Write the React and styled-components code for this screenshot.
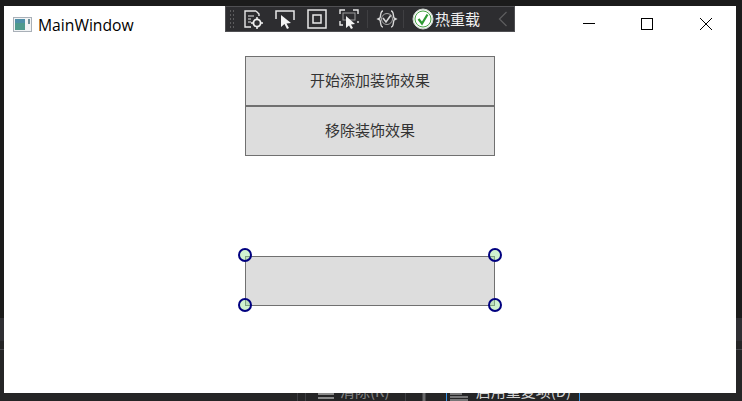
import React from 'react';
import styled, { createGlobalStyle } from 'styled-components';

const GlobalStyle = createGlobalStyle`
  html, body {
    margin: 0;
    padding: 0;
  }
  body {
    width: 742px;
    height: 401px;
    overflow: hidden;
  }
`;

const Desktop = styled.div`
  position: relative;
  width: 742px;
  height: 401px;
  padding: 6px 6px 0 4px;
  box-sizing: border-box;
  display: flex;
  flex-direction: column;
  background: linear-gradient(
    to bottom,
    #1b1b1b 0,
    #1b1b1b 318px,
    #2f2f33 318px,
    #2f2f33 341px,
    #252526 341px,
    #252526 349px,
    #46464a 349px,
    #46464a 350px,
    #252526 350px
  );
`;

const Window = styled.div`
  width: 732px;
  height: 387px;
  flex: none;
  background: #ffffff;
  display: flex;
  flex-direction: column;
`;

const TitleBar = styled.div`
  height: 36px;
  flex: none;
  display: flex;
  align-items: center;
  padding-left: 9px;
  font-family: "Open Sans", "Liberation Sans", sans-serif;
  font-size: 15.7px;
  color: #000000;
`;

const AppIcon = styled.svg`
  width: 20px;
  height: 15px;
  margin-right: 5px;
`;

const Title = styled.span`
  flex: 1;
  padding-top: 2px;
`;

const WindowButton = styled.button`
  width: ${props => (props.$wide ? 60 : 58)}px;
  height: 36px;
  padding: 0;
  border: none;
  background: transparent;
  display: flex;
  align-items: center;
  justify-content: center;
`;

const Content = styled.div`
  flex: 1;
  display: flex;
  flex-direction: column;
  align-items: center;
  padding-top: 14px;
`;

const ActionButton = styled.button`
  width: 250px;
  height: 50px;
  box-sizing: border-box;
  flex: none;
  margin-bottom: ${props => props.$gap || 0}px;
  padding: 0 0 4px;
  border: 1px solid #707070;
  background: #dddddd;
  color: #333333;
  font-family: "Noto Sans CJK SC", "Liberation Sans", sans-serif;
  font-size: 15px;
`;

const AdornedBox = styled.div`
  position: relative;
  width: 250px;
  height: 50px;
  box-sizing: border-box;
  flex: none;
  border: 1px solid #707070;
  background: #dddddd;
`;

const Handle = styled.span`
  position: absolute;
  width: 14px;
  height: 14px;
  box-sizing: border-box;
  border: 2.4px solid #00007f;
  border-radius: 50%;
  background: rgba(150, 230, 150, 0.45);
  left: ${props => (props.$right ? '242px' : '-8px')};
  top: ${props => (props.$bottom ? '41px' : '-9px')};
`;

const Toolbar = styled.div`
  position: absolute;
  left: 225px;
  top: 6px;
  width: 290px;
  height: 26px;
  box-sizing: border-box;
  border: 1px solid #505053;
  background: #2d2d30;
  display: flex;
  align-items: center;
`;

const Grip = styled.div`
  width: 6px;
  height: 20px;
  flex: none;
  margin: 0 7px 0 3px;
  background-image: radial-gradient(circle, #5c5c5e 1px, transparent 1px);
  background-size: 3px 4px;
`;

const ToolIcon = styled.svg`
  width: 22px;
  height: 22px;
  flex: none;
  margin-right: ${props => props.$gap ?? 10}px;
`;

const Divider = styled.div`
  width: 1px;
  height: 18px;
  flex: none;
  background: #3f3f42;
  margin-right: ${props => props.$gap || 8}px;
`;

const HotReload = styled.span`
  color: #f1f1f1;
  font-family: "Noto Sans CJK SC", sans-serif;
  font-size: 15px;
  line-height: 24px;
  width: 47px;
  flex: none;
  margin: 0 15px 0 1px;
  white-space: nowrap;
`;

const BottomStrip = styled.div`
  height: 8px;
  flex: none;
  margin: 0 -6px 0 -4px;
  overflow: hidden;
  display: flex;
  align-items: flex-start;
  background: #252526;
  color: #d4d4d4;
  font-family: "Noto Sans CJK SC", sans-serif;
  font-size: 15px;
`;

const StripLabel = styled.span`
  flex: none;
  line-height: 20px;
  margin-top: -12px;
  margin-left: ${props => props.$left}px;
  white-space: nowrap;
  opacity: ${props => (props.$dim ? 0.55 : 1)};
`;

const StripRule = styled.i`
  flex: none;
  width: 1px;
  height: 8px;
  margin-left: ${props => props.$left}px;
  background: ${props => props.$color || '#3f3f42'};
`;

const StripIcon = styled.svg`
  flex: none;
  width: 18px;
  height: 8px;
  margin-left: ${props => props.$left}px;
`;

function App() {
  return (
    <Desktop>
      <GlobalStyle />
      <Window>
        <TitleBar>
          <AppIcon viewBox="0 0 20 15">
            <rect x="0.5" y="0.5" width="18" height="14" fill="#f2f4f5" stroke="#a9b0b8" />
            <rect x="2" y="2" width="10" height="11" fill="#4f9a8d" />
            <rect x="2" y="2" width="10" height="4" fill="#4e8fa8" />
            <rect x="15" y="2" width="2" height="5" fill="#6f8f98" />
          </AppIcon>
          <Title>MainWindow</Title>
          <WindowButton aria-label="minimize">
            <svg width="12" height="12" viewBox="0 0 12 12">
              <path d="M0 5.5H12" stroke="#000" />
            </svg>
          </WindowButton>
          <WindowButton aria-label="maximize">
            <svg width="12" height="12" viewBox="0 0 12 12">
              <rect x="0.5" y="0.5" width="11" height="11" fill="none" stroke="#000" />
            </svg>
          </WindowButton>
          <WindowButton $wide aria-label="close">
            <svg width="12" height="12" viewBox="0 0 12 12">
              <path d="M0 0L12 12M12 0L0 12" stroke="#000" />
            </svg>
          </WindowButton>
        </TitleBar>
        <Content>
          <ActionButton>开始添加装饰效果</ActionButton>
          <ActionButton $gap={100}>移除装饰效果</ActionButton>
          <AdornedBox>
            <Handle />
            <Handle $right />
            <Handle $bottom />
            <Handle $right $bottom />
          </AdornedBox>
        </Content>
      </Window>

      <BottomStrip>
        <StripRule $left={297} />
        <StripRule $left={7} />
        <StripIcon $left={11} viewBox="0 0 18 8">
          <path d="M1 1H17M1 5H17" stroke="#8a8a8a" strokeWidth="2" />
        </StripIcon>
        <StripLabel $left={5} $dim>清除(R)</StripLabel>
        <StripRule $left={15} />
        <StripIcon $left={9} viewBox="0 0 18 8">
          <path d="M9 0V8" stroke="#6a6a6a" strokeWidth="3" />
        </StripIcon>
        <StripRule $left={13} $color="#3794e8" />
        <StripIcon $left={3} viewBox="0 0 18 8">
          <path d="M0 1H12M0 4H18M0 7H18" stroke="#c8c8c8" />
        </StripIcon>
        <StripLabel $left={8}>启用重复项(D)</StripLabel>
        <StripRule $left={8} $color="#3794e8" />
      </BottomStrip>

      <Toolbar>
        <Grip />
        <ToolIcon viewBox="0 0 22 22" $gap={10}>
          <path d="M14 3H3V19H9M14 3L17 6V8" fill="none" stroke="#e8e8e8" strokeWidth="1.4" />
          <path d="M6 8H12M6 11H9M6 14H9" stroke="#e8e8e8" strokeWidth="1.2" />
          <circle cx="15" cy="15" r="3.6" fill="none" stroke="#f1f1f1" strokeWidth="1.8" />
          <path d="M15 9V11M15 19V21M9 15H11M19 15H21" stroke="#f1f1f1" strokeWidth="1.5" />
        </ToolIcon>
        <ToolIcon viewBox="0 0 22 22" $gap={10}>
          <path d="M2 11V3H20V12" fill="none" stroke="#e8e8e8" strokeWidth="1.5" />
          <path d="M7 7L7 19L10.5 16L13 21L15 20L12.5 15.5L17 15Z" fill="#f4f4f4" />
        </ToolIcon>
        <ToolIcon viewBox="0 0 22 22" $gap={10}>
          <rect x="2" y="2" width="18" height="18" fill="none" stroke="#e8e8e8" strokeWidth="1.5" />
          <rect x="7" y="7" width="8" height="8" fill="none" stroke="#e8e8e8" strokeWidth="1.5" />
        </ToolIcon>
        <ToolIcon viewBox="0 0 22 22" $gap={7}>
          <path d="M2 6V2H7M15 2H20V6M2 13V17H5M20 13V15" fill="none" stroke="#e8e8e8" strokeWidth="1.4" />
          <rect x="5" y="5" width="12" height="7" fill="none" stroke="#9a9a9a" />
          <path d="M8 8L8 20L11 17.5L13 21L15 20L13 16.5L17 16Z" fill="#f4f4f4" />
        </ToolIcon>
        <Divider $gap={8} />
        <ToolIcon viewBox="0 0 22 22" $gap={5}>
          <path d="M7 3C4 3 5 8 4 10L2 11L4 12C5 14 4 19 7 19M15 3C18 3 17 8 18 10L20 11L18 12C17 14 18 19 15 19" fill="none" stroke="#d8d8d8" strokeWidth="1.4" />
          <path d="M7 10L10 14L15 7" fill="none" stroke="#d8d8d8" strokeWidth="1.6" />
          <circle cx="11" cy="11" r="5.5" fill="none" stroke="#a8a8a8" />
        </ToolIcon>
        <Divider $gap={8} />
        <ToolIcon viewBox="0 0 22 22" $gap={0}>
          <circle cx="11" cy="11" r="10" fill="#f7f7f7" stroke="#cfd8cf" strokeWidth="1" />
          <circle cx="11" cy="11" r="8" fill="#ffffff" stroke="#49a546" strokeWidth="1" />
          <path d="M6.5 11L10 15.5L15.5 6.5" fill="none" stroke="#2e9a33" strokeWidth="2.2" />
        </ToolIcon>
        <HotReload>热重载</HotReload>
        <svg width="12" height="18" viewBox="0 0 12 18">
          <path d="M9.5 2L2.5 9L9.5 16" fill="none" stroke="#5c5c5e" strokeWidth="1.3" />
        </svg>
      </Toolbar>
    </Desktop>
  );
}

export default App;
